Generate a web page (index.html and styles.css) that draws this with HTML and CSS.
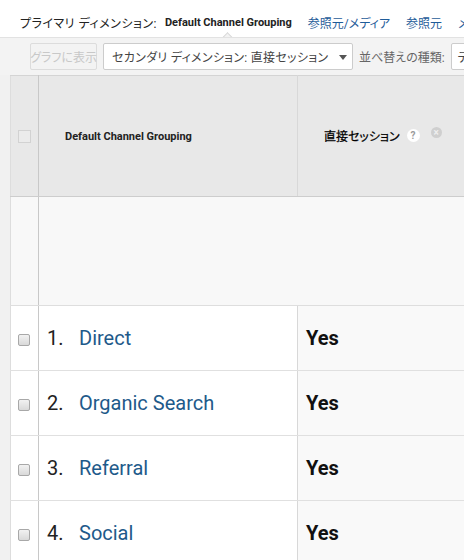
FILE: index.html
```html
<!DOCTYPE html>
<html lang="ja">
<head>
<meta charset="utf-8">
<link rel="stylesheet" href="styles.css">
</head>
<body>
<div class="top">
  <span class="label">プライマリ ディメンション:</span>
  <span class="primary">Default Channel Grouping</span>
  <a class="dim">参照元/メディア</a>
  <a class="dim">参照元</a>
  <a class="dim">メディア</a>
  <span class="caret"></span>
</div>
<div class="toolbar">
  <span class="btn">グラフに表示</span>
  <span class="select">セカンダリ ディメンション: 直接セッション<span class="tri"></span></span>
  <span class="sortlabel">並べ替えの種類:</span>
  <span class="select select2">デフォルト</span>
</div>
<div class="tablewrap">
  <table class="grid">
    <colgroup>
      <col class="c1">
      <col class="c2">
      <col class="c3">
    </colgroup>
    <thead>
      <tr class="head">
        <th class="cb"><span class="hbox"></span></th>
        <th class="name">Default Channel Grouping</th>
        <th class="val"><div class="vh"><span class="vt">直接セッション</span><span class="help">?</span><span class="close">×</span></div></th>
      </tr>
    </thead>
    <tbody>
      <tr class="empty">
        <td class="cb"></td>
        <td colspan="2"></td>
      </tr>
      <tr class="row">
        <td class="cb"><span class="box"></span></td>
        <td class="name"><span class="num">1.</span><a>Direct</a></td>
        <td class="val">Yes</td>
      </tr>
      <tr class="row">
        <td class="cb"><span class="box"></span></td>
        <td class="name"><span class="num">2.</span><a>Organic Search</a></td>
        <td class="val">Yes</td>
      </tr>
      <tr class="row">
        <td class="cb"><span class="box"></span></td>
        <td class="name"><span class="num">3.</span><a>Referral</a></td>
        <td class="val">Yes</td>
      </tr>
      <tr class="row">
        <td class="cb"><span class="box"></span></td>
        <td class="name"><span class="num">4.</span><a>Social</a></td>
        <td class="val">Yes</td>
      </tr>
    </tbody>
  </table>
</div>
</body>
</html>
```

FILE: styles.css
```css
html, body {
  margin: 0;
  padding: 0;
  background: #fff;
  font-family: Roboto, "Noto Sans CJK JP", sans-serif;
  font-feature-settings: "palt";
  overflow: hidden;
  width: 464px;
  height: 560px;
}

.top {
  position: relative;
  height: 37px;
  box-sizing: border-box;
  padding: 8px 0 0 20px;
  display: flex;
  align-items: center;
  white-space: nowrap;
  font-size: 12px;
  color: #333;
  overflow: hidden;
}
.top .label {
  color: #222;
  letter-spacing: 0.5px;
}
.top .primary {
  margin-left: 8px;
  font-size: 11px;
  font-weight: bold;
  color: #222;
}
.top .dim {
  margin-left: 16px;
  color: #1f5c99;
  font-size: 12px;
}
.caret {
  position: absolute;
  left: 223px;
  bottom: -1px;
  width: 8px;
  height: 8px;
  background: #f3f3f3;
  border-left: 1px solid #d8d8d8;
  border-top: 1px solid #d8d8d8;
  transform: translateY(5px) rotate(45deg);
}

.toolbar {
  height: 38px;
  box-sizing: border-box;
  background: #f3f3f3;
  border-top: 1px solid #e2e2e2;
  display: flex;
  align-items: center;
  padding-left: 30px;
  white-space: nowrap;
  font-size: 12px;
  overflow: hidden;
}
.btn {
  width: 67px;
  height: 27px;
  box-sizing: border-box;
  flex-shrink: 0;
  border: 1px solid #dcdcdc;
  border-radius: 2px;
  display: flex;
  align-items: center;
  justify-content: center;
  color: #c8c8c8;
  font-size: 12px;
}
.select {
  position: relative;
  margin-left: 6px;
  width: 250px;
  height: 27px;
  box-sizing: border-box;
  flex-shrink: 0;
  background: #fff;
  border: 1px solid #ccc;
  border-radius: 2px;
  display: flex;
  align-items: center;
  padding-left: 8px;
  color: #444;
  letter-spacing: 0.3px;
}
.tri {
  position: absolute;
  right: 5px;
  top: 11px;
  width: 0;
  height: 0;
  border-left: 4px solid transparent;
  border-right: 4px solid transparent;
  border-top: 5px solid #555;
}
.sortlabel {
  margin-left: 6px;
  color: #666;
}
.select2 {
  margin-left: 6px;
  width: 120px;
  padding-left: 6px;
}

.tablewrap {
  padding-left: 10px;
  background: #f1f1f1;
  height: 486px;
  overflow: hidden;
}
.grid {
  border-collapse: collapse;
  table-layout: fixed;
  width: 500px;
  background: #fff;
}
.c1 { width: 28px; }
.c2 { width: 259px; }
.c3 { width: 213px; }
.grid th, .grid td {
  padding: 0;
}
.head th {
  height: 120px;
  background: #e8e8e8;
  border-top: 1px solid #d4d4d4;
  border-bottom: 1px solid #cdcdcd;
  text-align: left;
  font-size: 11px;
  font-weight: bold;
  color: #222;
}
.grid .cb {
  border-left: 1px solid #ddd;
  border-right: 1px solid #c8c8c8;
  text-align: left;
  padding-left: 7px;
}
.grid .name {
  border-right: 1px solid #d8d8d8;
}
.head .name { padding-left: 26px; }
.head .val {
  padding-left: 26px;
  font-weight: normal;
  white-space: nowrap;
}
.vh {
  display: flex;
  align-items: center;
  margin-bottom: 1px;
}
.vt {
  font-size: 12px;
  color: #000;
  -webkit-text-stroke: 0.25px #000;
}
.help {
  display: inline-block;
  width: 13px;
  height: 13px;
  border-radius: 50%;
  background: #fff;
  color: #9a9a9a;
  font-size: 10px;
  font-weight: bold;
  line-height: 13px;
  text-align: center;
  margin-left: 7px;
}
.close {
  display: inline-block;
  width: 11px;
  height: 11px;
  border-radius: 50%;
  background: #cfcfcf;
  color: #eeeeee;
  font-size: 10px;
  line-height: 11px;
  text-align: center;
  margin-left: 11px;
  margin-bottom: 6px;
  font-weight: bold;
}
.hbox {
  display: inline-block;
  width: 11px;
  height: 11px;
  border: 1px solid #d2d2d2;
  background: #ebebeb;
  vertical-align: middle;
}

.empty td {
  height: 108px;
  background: #f8f8f8;
  border-bottom: 1px solid #dedede;
}
.row td {
  height: 64px;
  border-bottom: 1px solid #e0e0e0;
  font-size: 20px;
}
.row .val {
  background: #f9f9f9;
  padding-left: 8px;
  font-weight: bold;
  color: #111;
}
.row .name {
  padding-left: 8px;
  white-space: nowrap;
}
.num {
  display: inline-block;
  width: 32px;
  color: #222;
}
.row .name a {
  color: #1e5a8a;
}
.box {
  display: inline-block;
  width: 10px;
  height: 10px;
  border: 1px solid #a8a8a8;
  border-radius: 2px;
  background: linear-gradient(#f2f2f2, #d9d9d9);
  vertical-align: middle;
}
```
